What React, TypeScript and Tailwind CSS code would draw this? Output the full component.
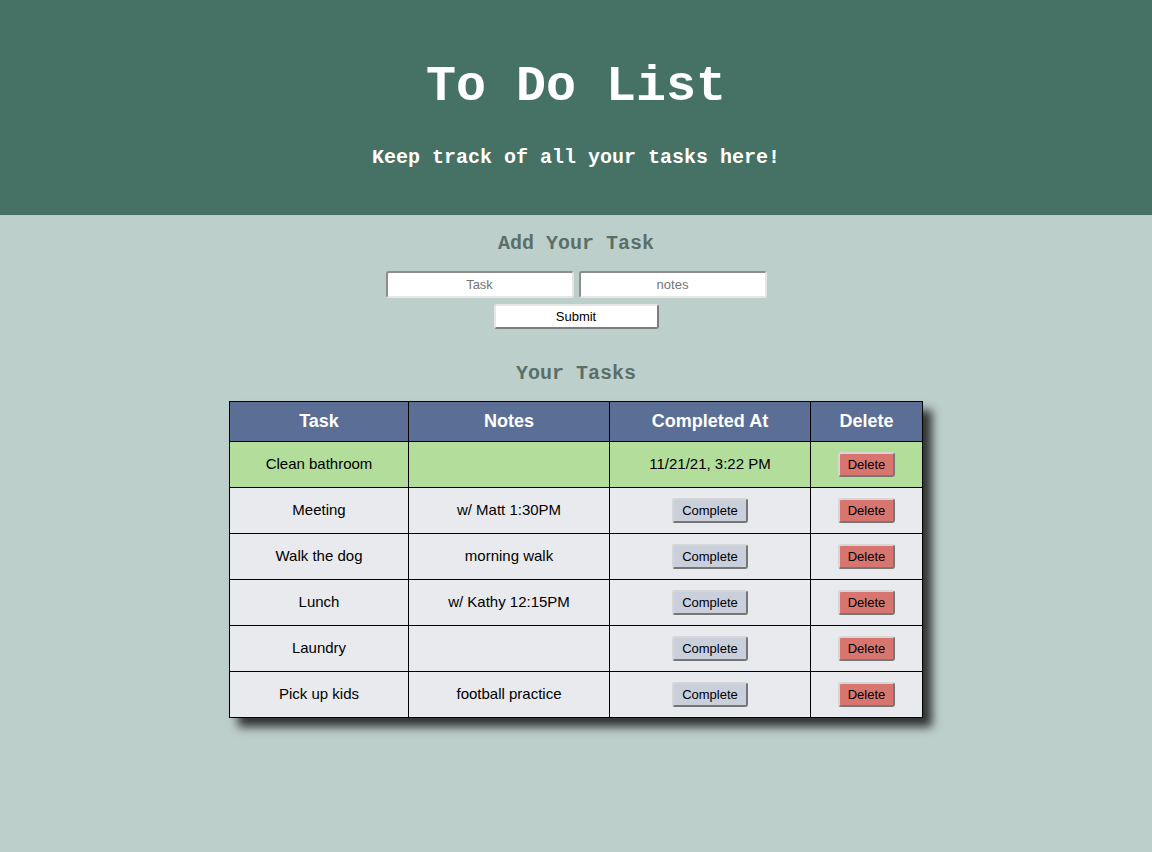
import React from "react";

type Task = { name: string; notes: string; completedAt?: string };

const tasks: Task[] = [
  { name: "Clean bathroom", notes: "", completedAt: "11/21/21, 3:22 PM" },
  { name: "Meeting", notes: "w/ Matt 1:30PM" },
  { name: "Walk the dog", notes: "morning walk" },
  { name: "Lunch", notes: "w/ Kathy 12:15PM" },
  { name: "Laundry", notes: "" },
  { name: "Pick up kids", notes: "football practice" },
];

const mono = "font-['Liberation_Mono','Courier_New',monospace] font-bold";
const sans = "font-['Liberation_Sans',Arial,sans-serif]";

function RowButton({ label, color }: { label: string; color: string }) {
  return (
    <button
      className={`${color} h-[25px] px-[8px] text-[13px] text-black rounded-[3px] border-2 border-t-[#d6d6d6] border-l-[#d6d6d6] border-r-[#767676] border-b-[#767676]`}
    >
      {label}
    </button>
  );
}

export default function App() {
  return (
    <div className={`min-h-[852px] bg-[#bdcfcb] ${sans}`}>
      <header className="h-[215px] bg-[#457265] flex flex-col items-center pt-[58px]">
        <h1 className={`${mono} text-white text-[50px] leading-[57px]`}>To Do List</h1>
        <p className={`${mono} text-white text-[20px] leading-[23px] mt-[31px]`}>
          Keep track of all your tasks here!
        </p>
      </header>

      <main className="flex flex-col items-center">
        <h2 className={`${mono} text-[#5b6f69] text-[20px] leading-[23px] mt-[17px]`}>Add Your Task</h2>
        <div className="flex gap-[5px] mt-[16px]">
          <input
            placeholder="Task"
            className="w-[188px] h-[27px] bg-white text-center text-[13px] placeholder:text-[#757575] rounded-[3px] border-2 border-t-[#8d8d8d] border-l-[#8d8d8d] border-r-[#e6e6e6] border-b-[#e6e6e6] outline-none"
          />
          <input
            placeholder="notes"
            className="w-[188px] h-[27px] bg-white text-center text-[13px] placeholder:text-[#757575] rounded-[3px] border-2 border-t-[#8d8d8d] border-l-[#8d8d8d] border-r-[#e6e6e6] border-b-[#e6e6e6] outline-none"
          />
        </div>
        <button className="mt-[6px] w-[165px] h-[25px] bg-white text-[13px] text-black rounded-[3px] border-2 border-t-[#e6e6e6] border-l-[#e6e6e6] border-r-[#7d7d7d] border-b-[#7d7d7d]">
          Submit
        </button>

        <h2 className={`${mono} text-[#5b6f69] text-[20px] leading-[23px] mt-[33px]`}>Your Tasks</h2>

        <table className="mt-[16px] border-collapse border border-black shadow-[9px_9px_9px_rgba(0,0,0,0.75)] text-[15px] text-black">
          <thead>
            <tr className="bg-[#5b6e96] text-white text-[18px] font-bold h-[40px]">
              <th className="w-[179px] border border-black">Task</th>
              <th className="w-[201px] border border-black">Notes</th>
              <th className="w-[201px] border border-black">Completed At</th>
              <th className="w-[112px] border border-black">Delete</th>
            </tr>
          </thead>
          <tbody>
            {tasks.map((t) => (
              <tr key={t.name} className={`h-[46px] text-center ${t.completedAt ? "bg-[#b3dd9a]" : "bg-[#e9eaee]"}`}>
                <td className="border border-black">{t.name}</td>
                <td className="border border-black">{t.notes}</td>
                <td className="border border-black">
                  {t.completedAt ? t.completedAt : <RowButton label="Complete" color="bg-[#c9cfdb]" />}
                </td>
                <td className="border border-black">
                  <RowButton label="Delete" color="bg-[#d8756f]" />
                </td>
              </tr>
            ))}
          </tbody>
        </table>
      </main>
    </div>
  );
}
